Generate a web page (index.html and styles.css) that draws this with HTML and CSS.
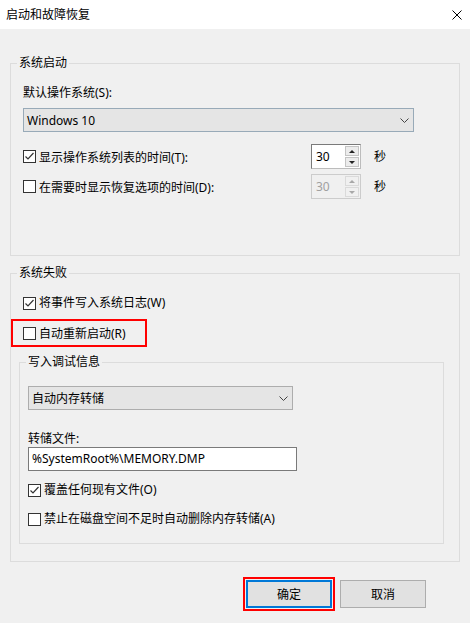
FILE: index.html
```html
<!DOCTYPE html>
<html lang="zh-CN">
<head>
<meta charset="utf-8">
<title>启动和故障恢复</title>
<link rel="stylesheet" href="styles.css">
</head>
<body>
<div class="window">
  <div class="titlebar">
    <span class="title">启动和故障恢复</span>
    <svg class="close" width="10" height="10" viewBox="0 0 10 10"><path d="M0.5 0.5 L9.5 9.5 M9.5 0.5 L0.5 9.5" stroke="#000" stroke-width="1" fill="none"/></svg>
  </div>
  <div class="content">
    <fieldset class="group group-startup">
      <legend>系统启动</legend>
      <div class="gbody gbody-startup">
        <div class="text-row">默认操作系统(S):</div>
        <div class="combo combo-os">
          <span>Windows 10</span>
          <svg class="chev" width="9" height="5" viewBox="0 0 9 5"><path d="M0.5 0.5 L4.5 4.5 L8.5 0.5" stroke="#444" stroke-width="1" fill="none"/></svg>
        </div>
        <div class="timer-grid">
          <div class="check">
            <span class="box"><svg width="11" height="11" viewBox="0 0 11 11"><path d="M1.5 5.5 L4 8 L9.5 2" stroke="#333" stroke-width="1.2" fill="none"/></svg></span>
            <span>显示操作系统列表的时间(T):</span>
          </div>
          <div class="spin">
            <span class="spin-val">30</span>
            <span class="spin-btns"><span class="sbtn"><span class="tri-up"></span></span><span class="sbtn"><span class="tri-down"></span></span></span>
          </div>
          <span class="unit">秒</span>
          <div class="check">
            <span class="box"></span>
            <span>在需要时显示恢复选项的时间(D):</span>
          </div>
          <div class="spin disabled">
            <span class="spin-val">30</span>
            <span class="spin-btns"><span class="sbtn"><span class="tri-up"></span></span><span class="sbtn"><span class="tri-down"></span></span></span>
          </div>
          <span class="unit">秒</span>
        </div>
      </div>
    </fieldset>

    <fieldset class="group group-failure">
      <legend>系统失败</legend>
      <div class="gbody gbody-failure">
        <div class="check text-row">
          <span class="box"><svg width="11" height="11" viewBox="0 0 11 11"><path d="M1.5 5.5 L4 8 L9.5 2" stroke="#333" stroke-width="1.2" fill="none"/></svg></span>
          <span>将事件写入系统日志(W)</span>
        </div>
        <div class="highlight">
          <div class="check">
            <span class="box"></span>
            <span>自动重新启动(R)</span>
          </div>
        </div>
        <fieldset class="group group-debug">
          <legend>写入调试信息</legend>
          <div class="gbody gbody-debug">
            <div class="combo combo-dump">
              <span>自动内存转储</span>
              <svg class="chev" width="9" height="5" viewBox="0 0 9 5"><path d="M0.5 0.5 L4.5 4.5 L8.5 0.5" stroke="#444" stroke-width="1" fill="none"/></svg>
            </div>
            <div class="text-row dump-label">转储文件:</div>
            <div class="textbox">%SystemRoot%\MEMORY.DMP</div>
            <div class="check text-row overwrite">
              <span class="box"><svg width="11" height="11" viewBox="0 0 11 11"><path d="M1.5 5.5 L4 8 L9.5 2" stroke="#333" stroke-width="1.2" fill="none"/></svg></span>
              <span>覆盖任何现有文件(O)</span>
            </div>
            <div class="check text-row disable-del">
              <span class="box"></span>
              <span>禁止在磁盘空间不足时自动删除内存转储(A)</span>
            </div>
          </div>
        </fieldset>
      </div>
    </fieldset>

    <div class="buttons">
      <button class="btn btn-ok">确定</button>
      <button class="btn">取消</button>
    </div>
  </div>
</div>
</body>
</html>
```

FILE: styles.css
```css
html, body {
  margin: 0;
  padding: 0;
}
body {
  font-family: "Noto Sans", "Noto Sans CJK SC", sans-serif;
  font-size: 12px;
  color: #000;
  background: #f0f0f0;
}
.window {
  width: 470px;
  height: 623px;
  background: #f0f0f0;
  overflow: hidden;
}
.titlebar {
  height: 29px;
  background: #fff;
  display: flex;
  align-items: center;
  justify-content: space-between;
  padding: 0 8px 0 6px;
}
.title {
  line-height: 16px;
}
.close {
  display: block;
}
.content {
  padding: 0 10px;
}
.group {
  margin: 0;
  padding: 0;
  border: 1px solid #dcdcdc;
  min-width: 0;
}
.group legend {
  margin-left: 6px;
  padding: 0 2px;
  line-height: 14px;
}
.group-startup {
  margin-top: 27px;
}
.gbody-startup {
  padding: 15px 12px 56px 12px;
}
.text-row {
  line-height: 16px;
  height: 16px;
}
.combo {
  box-sizing: border-box;
  height: 24px;
  background: #e5e5e5;
  border: 1px solid #adadad;
  display: flex;
  align-items: center;
  justify-content: space-between;
  padding: 0 4px 0 3px;
}
.combo-os {
  margin-top: 7px;
  width: 391px;
  border-color: #98aab8;
}
.chev {
  display: block;
}
.timer-grid {
  margin-top: 12px;
  display: grid;
  grid-template-columns: 288px 50px auto;
  grid-auto-rows: 25px;
  row-gap: 5px;
  align-items: center;
}
.timer-grid .unit {
  margin-left: 13px;
}
.check {
  display: flex;
  align-items: center;
  gap: 3px;
}
.box {
  box-sizing: border-box;
  width: 13px;
  height: 13px;
  border: 1px solid #333;
  background: #fff;
  display: flex;
  align-items: center;
  justify-content: center;
  flex: none;
}
.box svg {
  display: block;
}
.spin {
  box-sizing: border-box;
  width: 50px;
  height: 25px;
  background: #fff;
  border: 1px solid #7a7a7a;
  border-right-color: #bcbcbc;
  border-bottom-color: #bcbcbc;
  display: flex;
}
.spin-val {
  flex: 1;
  padding-left: 4px;
  line-height: 23px;
}
.spin-btns {
  width: 14px;
  display: flex;
  flex-direction: column;
  padding: 1px;
  gap: 1px;
  background: #fff;
}
.sbtn {
  flex: 1;
  box-sizing: border-box;
  border: 1px solid #c4c4c4;
  background: #ececec;
  display: flex;
  align-items: center;
  justify-content: center;
}
.tri-up {
  width: 0;
  height: 0;
  border-left: 3px solid transparent;
  border-right: 3px solid transparent;
  border-bottom: 3px solid #222;
}
.tri-down {
  width: 0;
  height: 0;
  border-left: 3px solid transparent;
  border-right: 3px solid transparent;
  border-top: 3px solid #222;
}
.spin.disabled {
  background: #f0f0f0;
  border-color: #cccccc;
}
.spin.disabled .spin-val {
  color: #a0a0a0;
}
.spin.disabled .spin-btns {
  background: #f0f0f0;
}
.spin.disabled .sbtn {
  border-color: #dadada;
  background: #f0f0f0;
}
.spin.disabled .tri-up {
  border-bottom-color: #a8a8a8;
}
.spin.disabled .tri-down {
  border-top-color: #a8a8a8;
}
.unit {
  line-height: 16px;
}
.group-failure {
  margin-top: 10px;
}
.gbody-failure {
  padding: 15px 12px 17px 12px;
}
.highlight {
  margin: 8px 0 0 -12px;
  box-sizing: border-box;
  width: 136px;
  height: 28px;
  border: 2px solid #ff0000;
  padding-left: 10px;
  display: flex;
  align-items: center;
}
.group-debug {
  margin: 8px 0 0 -4px;
  width: 425px;
  box-sizing: border-box;
}
.gbody-debug {
  padding: 17px 8px 16px 8px;
}
.combo-dump {
  width: 265px;
}
.dump-label {
  margin-top: 21px;
}
.textbox {
  box-sizing: border-box;
  width: 269px;
  height: 24px;
  background: #fff;
  border: 1px solid #7a7a7a;
  padding-left: 3px;
  line-height: 22px;
}
.overwrite {
  margin-top: 11px;
}
.disable-del {
  margin-top: 13px;
}
.buttons {
  margin-top: 18px;
  display: flex;
  justify-content: flex-end;
  gap: 8px;
  padding-right: 34px;
}
.btn {
  box-sizing: border-box;
  width: 86px;
  height: 28px;
  margin: 0;
  padding: 0;
  font: inherit;
  color: #000;
  background: #e1e1e1;
  border: 1px solid #adadad;
}
.btn-ok {
  border: 2px solid #0078d7;
  outline: 2px solid #ff0000;
  outline-offset: 1px;
}
```
